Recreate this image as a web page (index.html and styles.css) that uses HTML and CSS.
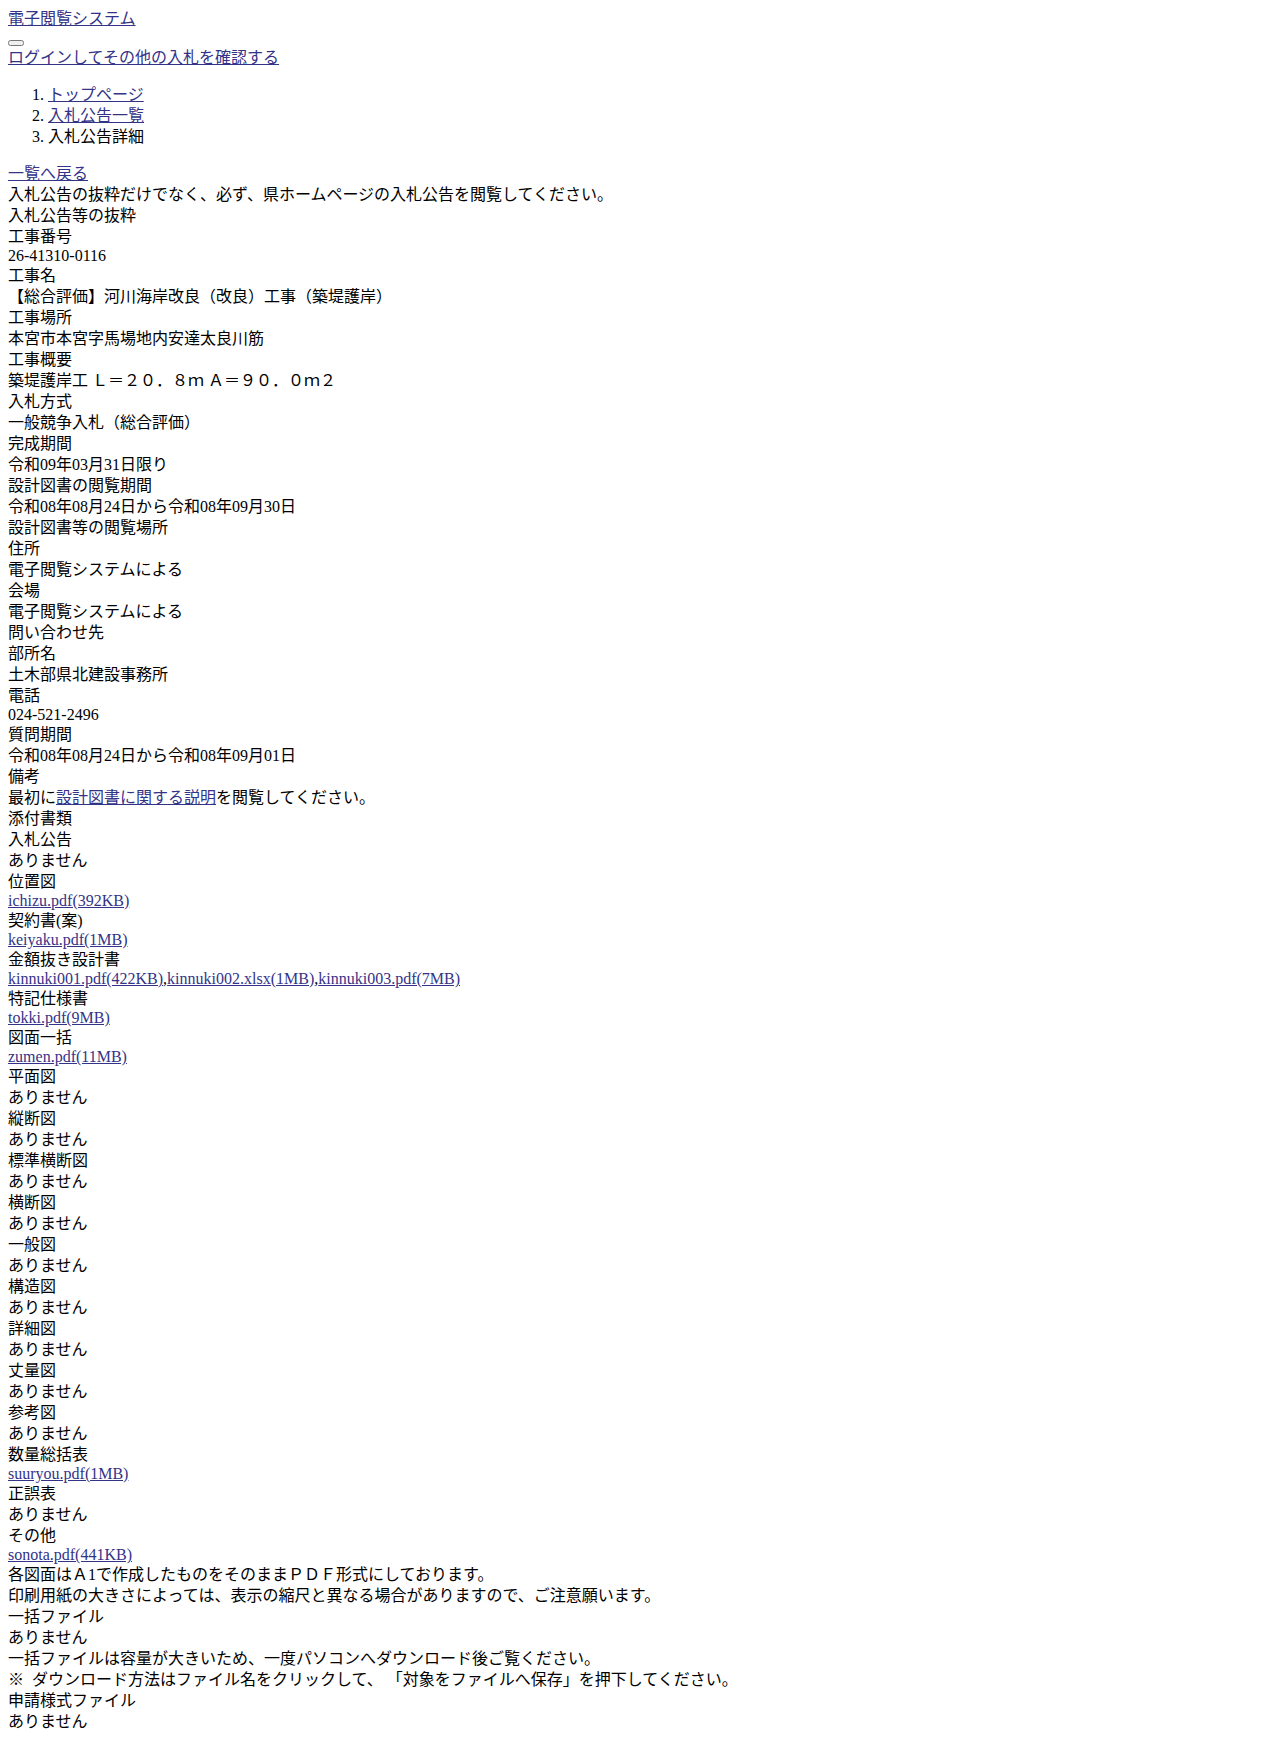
FILE: index.html
```html
<!DOCTYPE html>
<html lang="ja">
<head>
<meta charset="utf-8">
<title>入札公告詳細 | 電子閲覧システム</title>
<link rel="stylesheet" href="styles.css">
</head>
<body>
<header class="site-header">
  <div class="brand"><a href="#">電子閲覧システム</a></div>
  <div class="menu"><button class="menu-btn" type="button"></button></div>
  <div class="login"><a href="#">ログインしてその他の入札を確認する</a></div>
</header>
<nav class="breadcrumb">
  <ol class="crumbs">
    <li><a href="#">トップページ</a></li>
    <li><a href="#">入札公告一覧</a></li>
    <li>入札公告詳細</li>
  </ol>
</nav>
<main class="content">
  <div class="row"><a href="#">一覧へ戻る</a></div>
  <div class="row">入札公告の抜粋だけでなく、必ず、県ホームページの入札公告を閲覧してください。</div>
  <div class="row">入札公告等の抜粋</div>
  <div class="row">工事番号</div>
  <div class="row latin">26-41310-0116</div>
  <div class="row">工事名</div>
  <div class="row">【総合評価】河川海岸改良（改良）工事（築堤護岸）</div>
  <div class="row">工事場所</div>
  <div class="row">本宮市本宮字馬場地内安達太良川筋</div>
  <div class="row">工事概要</div>
  <div class="row">築堤護岸工 Ｌ＝２０．８ｍ Ａ＝９０．０ｍ２</div>
  <div class="row">入札方式</div>
  <div class="row">一般競争入札（総合評価）</div>
  <div class="row">完成期間</div>
  <div class="row">令和09年03月31日限り</div>
  <div class="row">設計図書の閲覧期間</div>
  <div class="row">令和08年08月24日から令和08年09月30日</div>
  <div class="row">設計図書等の閲覧場所</div>
  <div class="row">住所</div>
  <div class="row">電子閲覧システムによる</div>
  <div class="row">会場</div>
  <div class="row">電子閲覧システムによる</div>
  <div class="row">問い合わせ先</div>
  <div class="row">部所名</div>
  <div class="row">土木部県北建設事務所</div>
  <div class="row">電話</div>
  <div class="row latin">024-521-2496</div>
  <div class="row">質問期間</div>
  <div class="row">令和08年08月24日から令和08年09月01日</div>
  <div class="row">備考</div>
  <div class="row">最初に<a href="#">設計図書に関する説明</a>を閲覧してください。</div>
  <div class="row">添付書類</div>
  <div class="row">入札公告</div>
  <div class="row">ありません</div>
  <div class="row">位置図</div>
  <div class="row latin"><a href="#">ichizu.pdf(392KB)</a></div>
  <div class="row">契約書(案)</div>
  <div class="row latin"><a href="#">keiyaku.pdf(1MB)</a></div>
  <div class="row">金額抜き設計書</div>
  <div class="row latin"><a href="#">kinnuki001.pdf(422KB)</a>,<a href="#">kinnuki002.xlsx(1MB)</a>,<a href="#">kinnuki003.pdf(7MB)</a></div>
  <div class="row">特記仕様書</div>
  <div class="row latin"><a href="#">tokki.pdf(9MB)</a></div>
  <div class="row">図面一括</div>
  <div class="row latin"><a href="#">zumen.pdf(11MB)</a></div>
  <div class="row">平面図</div>
  <div class="row">ありません</div>
  <div class="row">縦断図</div>
  <div class="row">ありません</div>
  <div class="row">標準横断図</div>
  <div class="row">ありません</div>
  <div class="row">横断図</div>
  <div class="row">ありません</div>
  <div class="row">一般図</div>
  <div class="row">ありません</div>
  <div class="row">構造図</div>
  <div class="row">ありません</div>
  <div class="row">詳細図</div>
  <div class="row">ありません</div>
  <div class="row">丈量図</div>
  <div class="row">ありません</div>
  <div class="row">参考図</div>
  <div class="row">ありません</div>
  <div class="row">数量総括表</div>
  <div class="row latin"><a href="#">suuryou.pdf(1MB)</a></div>
  <div class="row">正誤表</div>
  <div class="row">ありません</div>
  <div class="row">その他</div>
  <div class="row latin"><a href="#">sonota.pdf(441KB)</a></div>
  <div class="row">各図面はＡ1で作成したものをそのままＰＤＦ形式にしております。</div>
  <div class="row">印刷用紙の大きさによっては、表示の縮尺と異なる場合がありますので、ご注意願います。</div>
  <div class="row">一括ファイル</div>
  <div class="row">ありません</div>
  <div class="row">一括ファイルは容量が大きいため、一度パソコンへダウンロード後ご覧ください。</div>
  <div class="row">※&nbsp; ダウンロード方法はファイル名をクリックして、 「対象をファイルへ保存」を押下してください。</div>
  <div class="row">申請様式ファイル</div>
  <div class="row">ありません</div>
</main>
</body>
</html>
```

FILE: styles.css
```css
html {
  background: #ffffff;
}

body {
  margin: 8px;
  color: #000000;
  font-family: "Liberation Serif", "Noto Sans CJK JP", serif;
  font-size: 16px;
  line-height: 21px;
}

a {
  color: #333388;
  text-decoration: underline;
}

.site-header {
  display: block;
}

.brand,
.login {
  line-height: 21px;
}

.menu {
  line-height: normal;
}

.menu-btn {
  margin: 0;
}

.breadcrumb {
  display: block;
}

.crumbs {
  margin: 16px 0;
  padding-left: 40px;
}

.content {
  display: block;
}

.row {
  line-height: 21px;
}

.row.latin {
  line-height: normal;
}
```
